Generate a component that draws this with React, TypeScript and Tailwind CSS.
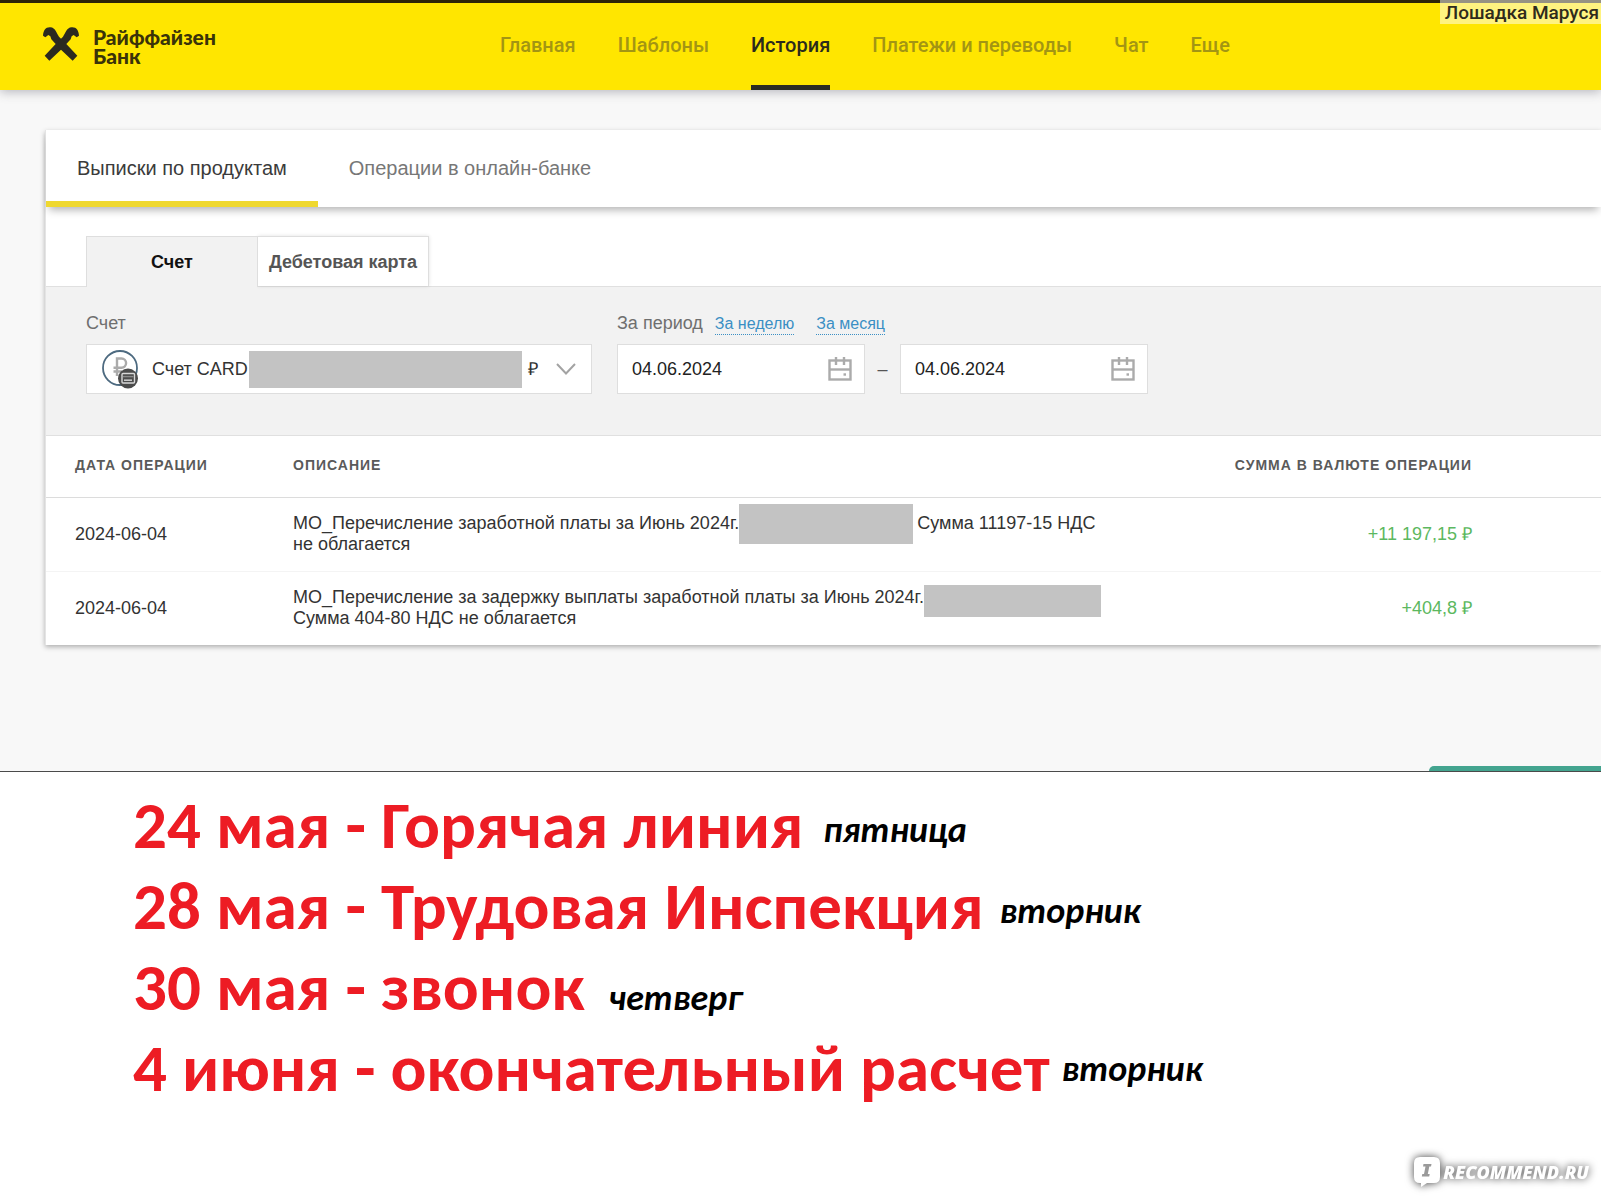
import type { ReactNode } from 'react';

const NAV_ITEMS = ['Главная', 'Шаблоны', 'История', 'Платежи и переводы', 'Чат', 'Еще'];

const NOTES = [
  { text: '24 мая - Горячая линия', day: 'пятница', layout: 'items-center gap-5', dayPad: 'pt-2' },
  { text: '28 мая - Трудовая Инспекция', day: 'вторник', layout: 'items-center gap-4', dayPad: 'pt-2' },
  { text: '30 мая - звонок', day: 'четверг', layout: 'items-baseline gap-6', dayPad: '' },
  { text: '4 июня - окончательный расчет', day: 'вторник', layout: 'items-center gap-3', dayPad: '' },
];

const OPERATIONS: { id: number; date: string; description: ReactNode; amount: string }[] = [
  {
    id: 1,
    date: '2024-06-04',
    description: (
      <>
        МО_Перечисление заработной платы за Июнь 2024г.
        <span className="inline-block w-[174px] h-10 -my-4 mr-1 align-middle bg-[#c3c3c3]" />
        Сумма 11197-15 НДС не облагается
      </>
    ),
    amount: '+11 197,15 ₽',
  },
  {
    id: 2,
    date: '2024-06-04',
    description: (
      <>
        МО_Перечисление за задержку выплаты заработной платы за Июнь 2024г.
        <span className="inline-block w-[177px] h-8 -mt-3 -mb-4 mr-1 align-middle bg-[#c3c3c3]" />
        Сумма 404-80 НДС не облагается
      </>
    ),
    amount: '+404,8 ₽',
  },
];

function BankLogo() {
  const head =
    'M0 26 L7 31 L16 24 L22 28 L25 37 L38 51 L5 86 L19 101 L54 68 L62 60 L62 38 L54 35 L48 29 C41 20 38 2 22 1 C8 0 1 10 0 26 Z';
  return (
    <svg className="w-9 h-[34px]" viewBox="0 0 108 102" fill="#2b2a20" aria-hidden="true">
      <path d={head} />
      <path d={head} transform="translate(108 0) scale(-1 1)" />
    </svg>
  );
}

function AccountIcon() {
  return (
    <svg className="w-10 h-10" viewBox="0 0 40 40" fill="none" aria-hidden="true">
      <circle cx="19" cy="19" r="17" stroke="#4d6a80" strokeWidth="1.8" fill="#fff" />
      <path
        d="M16 27 V9.5 H20.5 A4.6 4.6 0 0 1 20.5 18.7 H12.5 M12.5 22.5 H21"
        stroke="#ababab"
        strokeWidth="2.4"
      />
      <circle cx="27" cy="29.5" r="10" fill="#4b4b4b" />
      <rect x="21" y="24.5" width="12.5" height="9.5" rx="1" stroke="#d8d8d8" strokeWidth="1.4" />
      <path d="M22 27.6 H32.5" stroke="#8a8a8a" strokeWidth="1.4" />
      <path d="M23 31.2 H31" stroke="#c8c8c8" strokeWidth="1.6" />
    </svg>
  );
}

function CalendarIcon() {
  return (
    <svg className="w-6 h-6" viewBox="0 0 24 24" fill="none" stroke="#ababab" strokeWidth="2.4" aria-hidden="true">
      <rect x="1.5" y="3.5" width="21" height="19" />
      <path d="M1.5 12.5 H22.5" />
      <path d="M8 0 V8 M16 0 V8" />
      <path d="M15.5 17.5 H18" />
    </svg>
  );
}

function DateField({ id, label }: { id: string; label: string }) {
  return (
    <div className="flex items-center w-[248px] h-[50px] pl-[14px] pr-3 bg-white border border-[#dedede]">
      <input
        id={id}
        type="text"
        aria-label={label}
        defaultValue="04.06.2024"
        className="flex-1 min-w-0 text-lg text-[#222] bg-transparent outline-none"
      />
      <button type="button" aria-label="Открыть календарь">
        <CalendarIcon />
      </button>
    </div>
  );
}

function Header() {
  return (
    <header className="relative z-10 flex items-stretch h-[90px] border-t-3 border-[#2d2407] bg-[#ffe600] shadow-[0_2px_10px_rgba(60,60,80,0.35)]">
      <a href="#" className="flex items-start gap-[14px] w-[500px] pl-[43px] pt-6">
        <BankLogo />
        <span className="font-['Lato',sans-serif] font-black text-[21px] leading-[19px] text-[#3a3309]">
          Райффайзен
          <br />
          Банк
        </span>
      </a>
      <nav className="flex gap-[42px] font-['Roboto',sans-serif] font-medium text-xl">
        {NAV_ITEMS.map((item) => (
          <a
            key={item}
            href="#"
            className={
              item === 'История'
                ? 'flex items-center border-b-5 pt-px border-[#2b2b23] text-[#2b2b1c]'
                : 'flex items-center border-b-5 pt-px border-transparent text-[#a39513]'
            }
          >
            {item}
          </a>
        ))}
      </nav>
      <div className="absolute right-0 -top-[3px] h-6 pl-[5px] pr-[2px] bg-white/50 font-['Roboto',sans-serif] font-medium text-[19px] leading-[26px] text-[#2f2b1c]">
        Лошадка Маруся
      </div>
    </header>
  );
}

function Filters() {
  return (
    <form className="flex items-start gap-[25px] h-[150px] pl-10 pt-[23px] bg-[#f2f2f2] border-y border-[#e0e0e0]">
      <div>
        <label htmlFor="account" className="block h-[34px] text-lg leading-[27px] text-[#6f6f6f]">
          Счет
        </label>
        <div className="relative w-[506px]">
          <select
            id="account"
            className="block w-full h-[50px] pl-[65px] appearance-none bg-white border border-[#dedede] text-lg text-[#333]"
          >
            <option>Счет CARD</option>
          </select>
          <div className="absolute inset-0 flex items-center pl-[15px] pr-4 pointer-events-none">
            <AccountIcon />
            <span className="ml-[108px] w-[273px] h-[37px] bg-[#c3c3c3]" />
            <span className="flex-1 pl-[6px] text-lg text-[#333]">₽</span>
            <svg className="w-5 h-3" viewBox="0 0 20 12" fill="none" stroke="#a3a3a3" strokeWidth="2" aria-hidden="true">
              <path d="M1 1 L10 10.5 L19 1" />
            </svg>
          </div>
        </div>
      </div>
      <div>
        <div className="flex h-[34px] leading-[27px]">
          <label htmlFor="date-from" className="text-lg leading-[27px] text-[#6f6f6f]">
            За период
          </label>
          <div className="flex items-start gap-[22px] pt-1 ml-3 text-base leading-5 text-[#3b8fc4]">
            <a href="#" className="border-b border-dotted border-[#3b8fc4]">
              За неделю
            </a>
            <a href="#" className="border-b border-dotted border-[#3b8fc4]">
              За месяц
            </a>
          </div>
        </div>
        <div className="flex items-center">
          <DateField id="date-from" label="Начало периода" />
          <span className="w-[35px] text-center text-lg text-[#555]">–</span>
          <DateField id="date-to" label="Конец периода" />
        </div>
      </div>
    </form>
  );
}

function OperationsTable() {
  return (
    <table className="w-full bg-white text-lg leading-[21px] text-[#333]">
      <thead>
        <tr className="h-[61px] border-b border-[#dcdcdc] text-sm tracking-[1px] text-[#5a5a5a]">
          <th className="w-[247px] pl-[29px] pb-[2px] text-left font-bold">ДАТА ОПЕРАЦИИ</th>
          <th className="pb-[2px] text-left font-bold">ОПИСАНИЕ</th>
          <th className="pr-[129px] pb-[2px] text-right font-bold">СУММА В ВАЛЮТЕ ОПЕРАЦИИ</th>
        </tr>
      </thead>
      <tbody>
        {OPERATIONS.map((op) => (
          <tr key={op.id} className="h-[74px] border-b border-[#f4f4f4] last:border-0">
            <td className="pl-[29px]">{op.date}</td>
            <td>
              <div className="max-w-[826px]">{op.description}</div>
            </td>
            <td className="pr-[129px] text-right whitespace-nowrap text-[#5cb860]">{op.amount}</td>
          </tr>
        ))}
      </tbody>
    </table>
  );
}

function Watermark() {
  return (
    <footer className="flex items-center justify-end gap-[3px] mt-12 pr-3 drop-shadow-[0_0_4px_rgba(0,0,0,0.75)]">
      <svg className="w-[26px] h-[30px]" viewBox="0 0 26 30" aria-hidden="true">
        <path
          d="M6 0 H20 Q26 0 26 6 V20 Q26 26 20 26 H13 L7 30 V26 H6 Q0 26 0 20 V6 Q0 0 6 0 Z"
          fill="#fff"
        />
        <path d="M9.5 7 H17.5 L17 9.5 H15.3 L13.8 17 H15.7 L15.2 19.5 H7.8 L8.3 17 H10 L11.5 9.5 H9 Z" fill="#9a9a9a" />
      </svg>
      <span className="font-['Open_Sans',sans-serif] font-extrabold italic text-lg leading-6 text-white">
        RECOMMEND.RU
      </span>
    </footer>
  );
}

export default function App() {
  return (
    <div className="min-h-screen pr-[3px] bg-white font-['Liberation_Sans',Arial,sans-serif]">
      <div className="overflow-hidden bg-[#f8f8f8] border-b border-[#4a4a4a]">
        <Header />
        <main className="pl-[45px] pt-10">
          <section className="border-l border-[#e4e4e4] bg-white shadow-[0_2px_5px_rgba(0,0,0,0.3)]">
            <div className="flex h-[77px] text-xl shadow-[0_6px_8px_-3px_rgba(0,0,0,0.3)]">
              <button type="button" className="px-[31px] pt-1 border-b-6 border-[#efd82f] text-[#3b3b3b]">
                Выписки по продуктам
              </button>
              <button type="button" className="px-[31px] pt-1 border-b-6 border-transparent text-[#777]">
                Операции в онлайн-банке
              </button>
            </div>
            <div className="flex pl-10 pt-[29px] text-lg font-bold">
              <button
                type="button"
                className="relative z-10 w-[172px] h-[51px] -mb-px bg-[#f2f2f2] border border-b-0 border-[#dedede] text-[#111]"
              >
                Счет
              </button>
              <button
                type="button"
                className="w-[171px] h-[50px] border border-l-0 border-b-0 border-[#dedede] text-[#555] shadow-[0_0_4px_rgba(0,0,0,0.12)]"
              >
                Дебетовая карта
              </button>
            </div>
            <Filters />
            <OperationsTable />
          </section>
          <div className="flex items-end justify-end h-[126px]">
            <div className="w-[172px] h-[5px] rounded-tl-md bg-[#43a48f]" />
          </div>
        </main>
      </div>
      <section className="pl-[133px] pt-[13px] font-['Calibri','Carlito','Lato',sans-serif] font-bold">
        {NOTES.map((note) => (
          <div key={note.text} className={`flex ${note.layout}`}>
            <span className="text-[67px] leading-[81px] text-[#ed1c24]">{note.text}</span>
            <span className={`italic text-4xl text-black ${note.dayPad}`}>{note.day}</span>
          </div>
        ))}
      </section>
      <Watermark />
    </div>
  );
}
